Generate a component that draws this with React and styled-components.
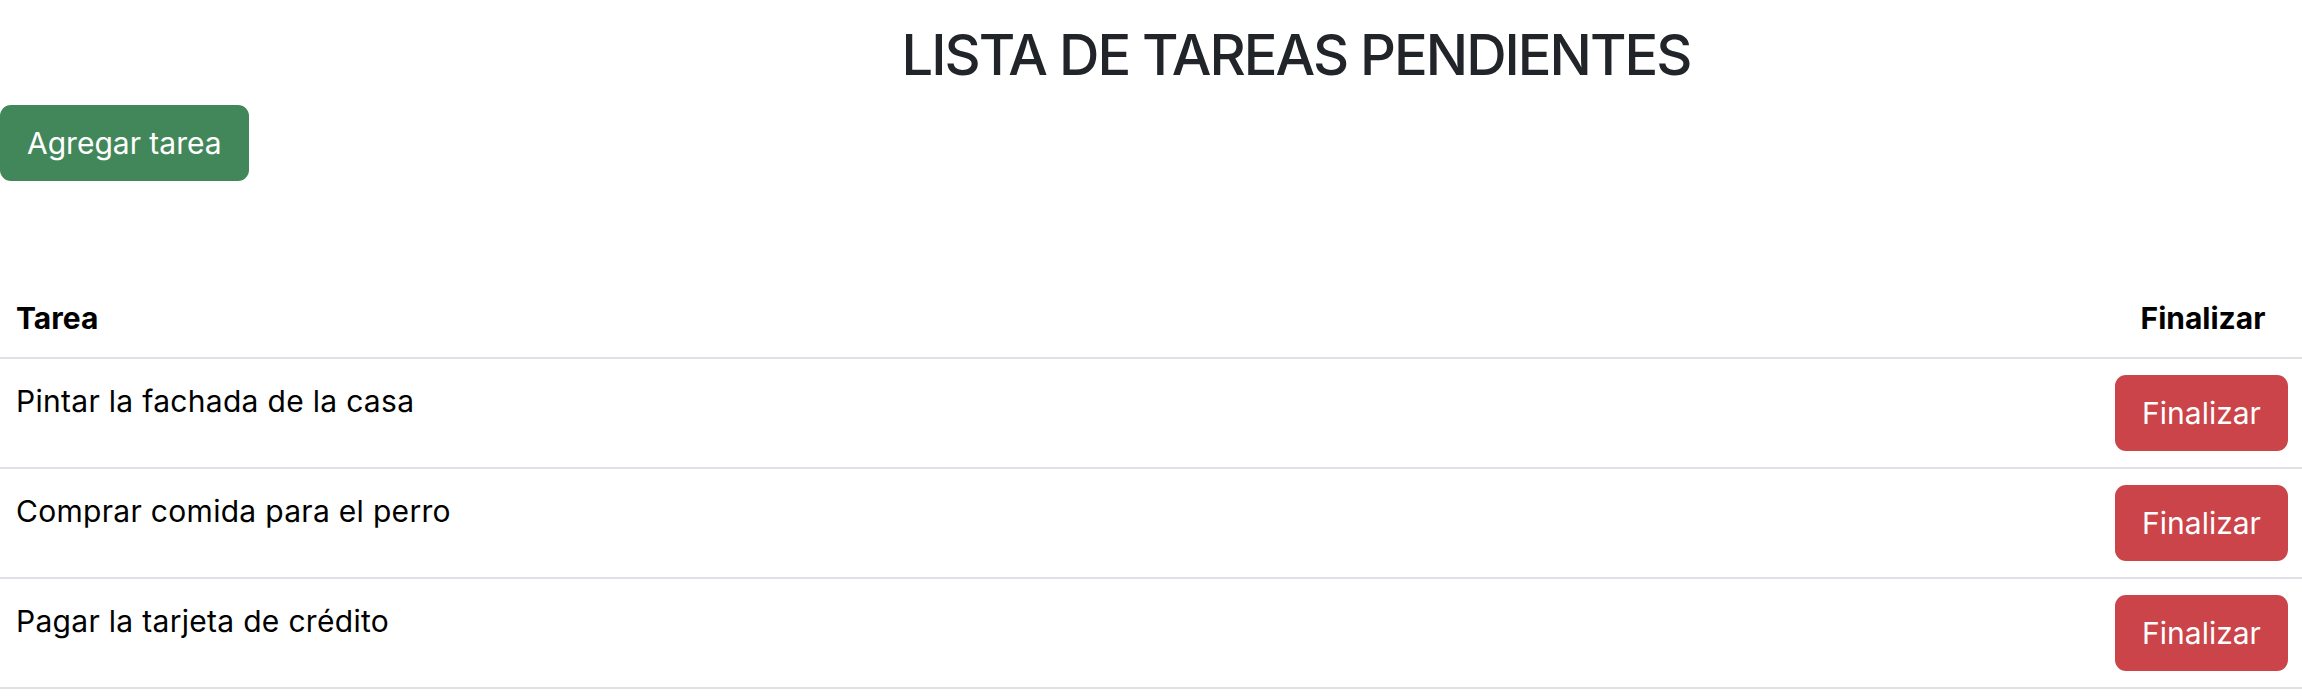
import React from 'react';
import styled, { createGlobalStyle } from 'styled-components';

const GlobalStyle = createGlobalStyle`
  body {
    margin: 0;
    background: #fff;
    font-family: Inter, "Noto Sans", sans-serif;
    -webkit-font-smoothing: antialiased;
  }
`;

const Page = styled.div`
  width: 2302px;
`;

const Title = styled.h1`
  margin: 0;
  padding: 22px 0 0 290px;
  text-align: center;
  font-size: 56px;
  font-weight: 500;
  letter-spacing: -2px;
  line-height: 67px;
  color: #212529;
`;

const Toolbar = styled.div`
  display: flex;
  margin-top: 16px;
`;

const Button = styled.button`
  border: 0;
  border-radius: 11px;
  padding: 15px 27px;
  font-family: inherit;
  font-size: 30px;
  line-height: 46px;
  color: #fff;
  background: ${({ variant }) => (variant === 'danger' ? '#cb444a' : '#42875a')};
  cursor: pointer;
`;

const Table = styled.table`
  width: 100%;
  margin-top: 94px;
  border-collapse: collapse;
  color: #000;
`;

const HeadCell = styled.th`
  padding: 17px 13px 13px 16px;
  font-size: 30px;
  font-weight: 700;
  line-height: 52px;
  text-align: ${({ align }) => align || 'left'};
  width: ${({ w }) => w || 'auto'};
  border-bottom: 2px solid #dee2e6;
`;

const Cell = styled.td`
  padding: 16px 13px 16px 16px;
  font-size: 30px;
  letter-spacing: 0.3px;
  line-height: 52px;
  vertical-align: top;
  text-align: left;
  border-bottom: 2px solid #dee2e6;
`;

const ActionCell = styled(Cell)`
  padding: 16px 13px;
  letter-spacing: 0;
  text-align: center;
`;

const tareas = [
  'Pintar la fachada de la casa',
  'Comprar comida para el perro',
  'Pagar la tarjeta de crédito',
];

export default function App() {
  return (
    <Page>
      <GlobalStyle />
      <Title>LISTA DE TAREAS PENDIENTES</Title>
      <Toolbar>
        <Button>Agregar tarea</Button>
      </Toolbar>
      <Table>
        <thead>
          <tr>
            <HeadCell>Tarea</HeadCell>
            <HeadCell align="center" w="172px">Finalizar</HeadCell>
          </tr>
        </thead>
        <tbody>
          {tareas.map((t) => (
            <tr key={t}>
              <Cell>{t}</Cell>
              <ActionCell>
                <Button variant="danger">Finalizar</Button>
              </ActionCell>
            </tr>
          ))}
        </tbody>
      </Table>
    </Page>
  );
}
